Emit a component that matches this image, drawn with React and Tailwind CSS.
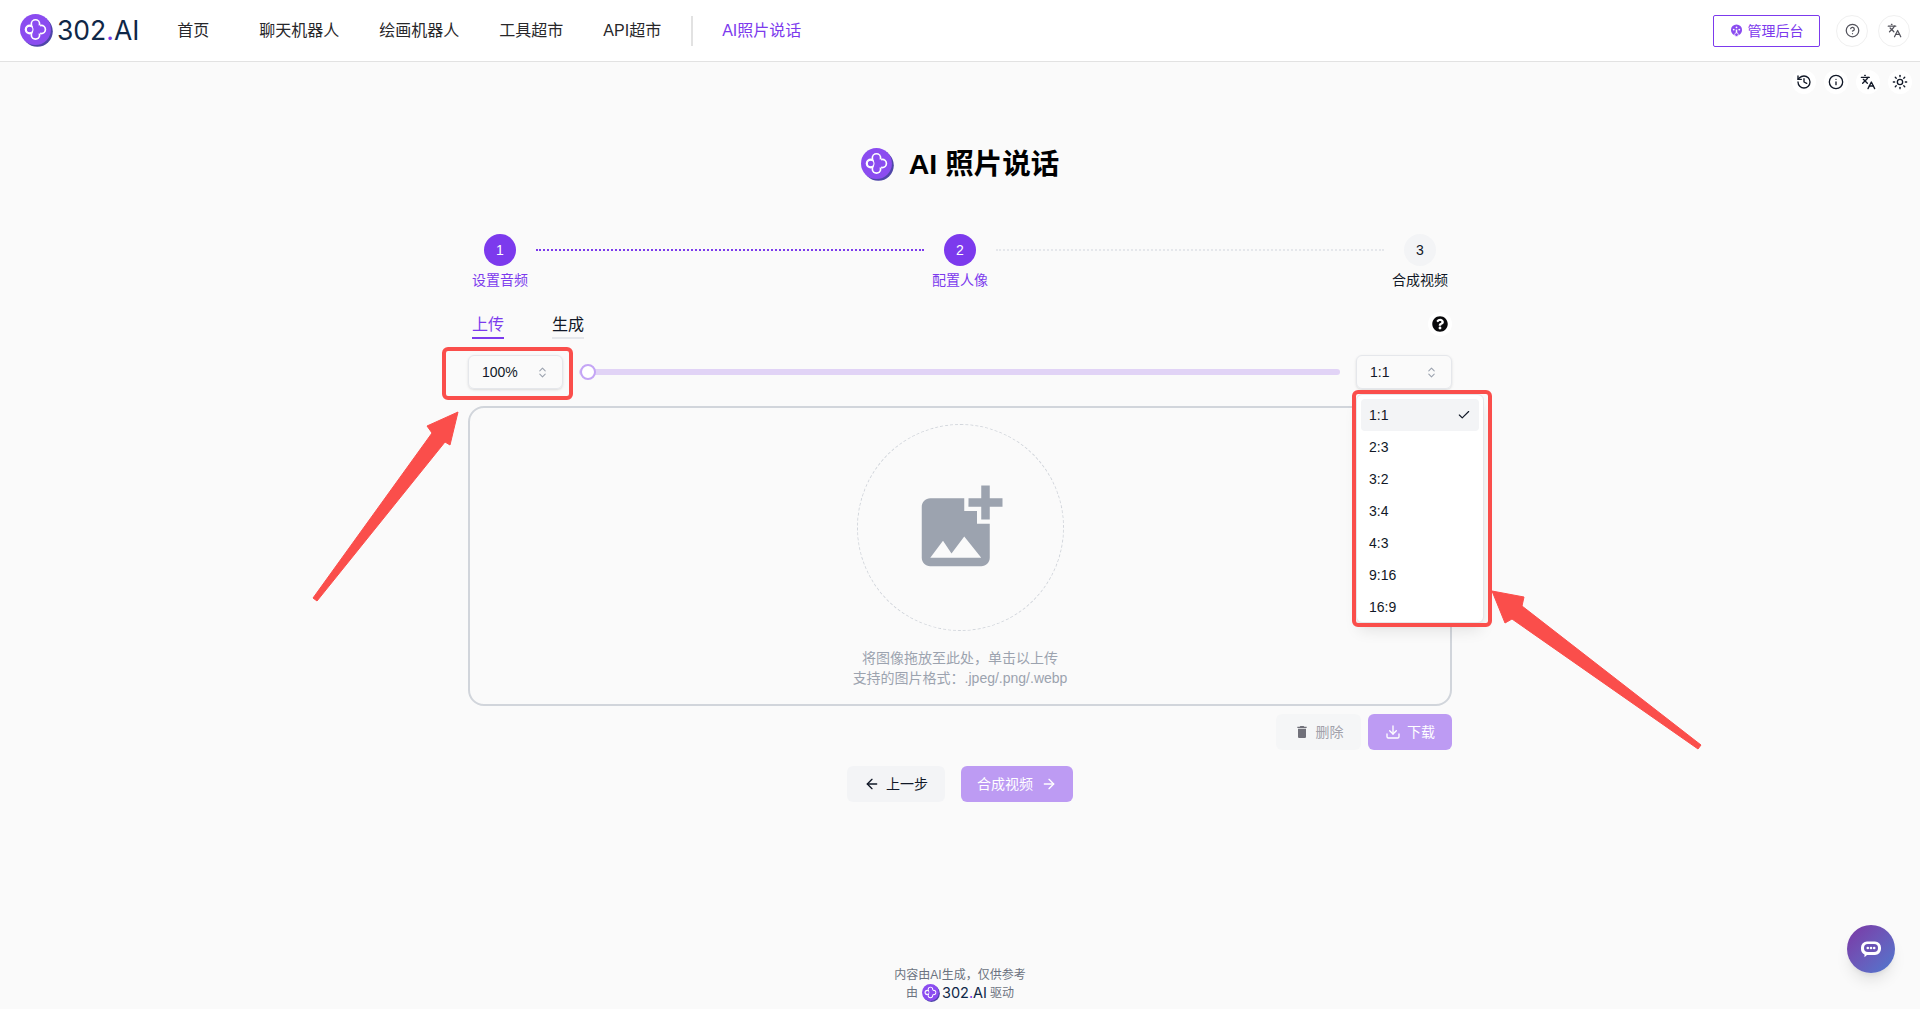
import React from "react";
import { ArrowLeft, ArrowRight, Check, ChevronsUpDown, CircleHelp, Download, History, Info, Languages, Sun } from "lucide-react";
import { FaQuestionCircle } from "react-icons/fa";

const Logo = ({ size = 32 }) => (
  <svg width={size} height={size} viewBox="0 0 32 32" className="shrink-0">
    <circle cx="16.8" cy="16.8" r="15" fill="#4f46a8" />
    <circle cx="15" cy="15" r="15" fill="#8b4cf0" />
    <g fill="#fff">
      <circle cx="15" cy="9.6" r="4.8" />
      <circle cx="9.4" cy="15" r="4.8" />
      <circle cx="20.6" cy="15" r="4.8" />
      <circle cx="15" cy="20.4" r="4.8" />
    </g>
    <g fill="#8b4cf0">
      <circle cx="15" cy="9.6" r="3.2" />
      <circle cx="20.6" cy="15" r="3.2" />
      <circle cx="15" cy="20.4" r="3.2" />
      <rect x="12.5" y="11" width="7" height="8" />
    </g>
    <circle cx="9.4" cy="15" r="3.2" fill="#8b4cf0" stroke="#fff" strokeWidth="1" />
  </svg>
);

const Brand = ({ className }) => (
  <span className={`text-[#0f2747] ${className}`} style={{ fontFamily: "Inter, sans-serif" }}>
    302<span className="text-[#7c3aed]">.</span>AI
  </span>
);

const ToolIcon = ({ children }) => (
  <div className="w-6 h-6 rounded-full bg-white flex items-center justify-center text-[#111827]">{children}</div>
);

const Step = ({ n, label, active }) => (
  <div className="w-16 flex flex-col items-center shrink-0">
    <div className={`w-8 h-8 rounded-full flex items-center justify-center text-sm ${active ? "bg-[#7c3aed] text-white" : "bg-[#f3f4f6] text-[#111827]"}`}>
      {n}
    </div>
    <div className={`mt-1 text-sm leading-5 whitespace-nowrap ${active ? "text-[#7c3aed]" : "text-[#111827]"}`}>{label}</div>
  </div>
);

const Select = ({ value, className }) => (
  <div className={`h-[34px] shrink-0 rounded-md border border-[#e5e7eb] shadow-sm flex items-center justify-between pl-[13px] pr-[13px] text-sm text-[#111827] ${className}`}>
    <span>{value}</span>
    <ChevronsUpDown size={13} className="text-[#9ca3af]" />
  </div>
);

const ratios = ["1:1", "2:3", "3:2", "3:4", "4:3", "9:16", "16:9"];

export default function App() {
  return (
    <div
      className="relative min-h-[1009px] flex flex-col bg-[#fafafa] overflow-hidden"
      style={{ fontFamily: '"Liberation Sans", "Noto Sans CJK SC", sans-serif' }}
    >
      {/* top nav */}
      <header className="h-[62px] shrink-0 bg-white border-b border-[#e2e2e2] flex items-center pl-5 pr-[10px]">
        <Logo size={33} />
        <Brand className="ml-[4px] text-[26.5px] leading-none" />
        <nav className="ml-[38px] flex items-center gap-10 text-base text-[#27272a]">
          <span className="mr-[10px]">首页</span>
          <span>聊天机器人</span>
          <span>绘画机器人</span>
          <span>工具超市</span>
          <span>API超市</span>
        </nav>
        <div className="ml-[30px] w-[2px] h-[30px] bg-[#e2e2e2]" />
        <span className="ml-[29px] text-base text-[#7c3aed]">AI照片说话</span>
        <div className="ml-auto flex items-center">
          <button className="w-[107px] h-8 rounded-[2px] border-[1.5px] border-[#7c3aed] flex items-center justify-center gap-[5px] text-sm text-[#7c3aed]">
            <svg width="13" height="13" viewBox="0 0 14 14">
              <circle cx="7" cy="6.5" r="6" fill="#8b4cf0" />
              <circle cx="4" cy="6" r="1" fill="#fff" />
              <circle cx="7" cy="3.6" r="1" fill="#fff" />
              <circle cx="10" cy="6" r="1" fill="#fff" />
              <rect x="6.2" y="6" width="1.6" height="6" fill="#fff" />
              <circle cx="7" cy="11.5" r="2" fill="#8b4cf0" stroke="#fff" strokeWidth="0.8" />
            </svg>
            管理后台
          </button>
          <div className="ml-4 w-8 h-8 rounded-full border border-[#f0f0f0] flex items-center justify-center text-[#52525b]">
            <CircleHelp size={15} />
          </div>
          <div className="ml-[10px] w-8 h-8 rounded-full border border-[#f0f0f0] flex items-center justify-center text-[#52525b]">
            <Languages size={15} />
          </div>
        </div>
      </header>

      {/* page tools */}
      <div className="mt-2 pr-2 flex justify-end gap-2">
        <ToolIcon><History size={16} /></ToolIcon>
        <ToolIcon><Info size={16} /></ToolIcon>
        <ToolIcon><Languages size={16} /></ToolIcon>
        <ToolIcon><Sun size={16} /></ToolIcon>
      </div>

      <h1 className="mt-[52px] flex items-center justify-center gap-[15px] text-[28.5px] leading-9 font-bold text-black">
        <Logo size={33} />
        AI 照片说话
      </h1>

      <main className="relative w-[984px] mx-auto mt-[52px]">
        {/* steps */}
        <div className="flex items-start">
          <Step n="1" label="设置音频" active />
          <div className="flex-1 mx-1 mt-[15px] border-t-2 border-dotted border-[#7c3aed]" />
          <Step n="2" label="配置人像" active />
          <div className="flex-1 mx-1 mt-[15px] border-t-2 border-dotted border-[#e5e7eb]" />
          <Step n="3" label="合成视频" />
        </div>

        {/* tabs */}
        <div className="mt-[23px] pl-1 flex items-start justify-between">
          <div className="flex gap-12 text-base">
            <div className="h-[26px] leading-6 border-b-2 border-[#7c3aed] text-[#7c3aed]">上传</div>
            <div className="h-[26px] leading-6 border-b-2 border-[#e5e7eb] text-[#111827]">生成</div>
          </div>
          <div className="-mt-[1px] w-6 h-6 rounded-full bg-white flex items-center justify-center text-[#09090b]">
            <FaQuestionCircle size={16} />
          </div>
        </div>

        {/* size row */}
        <div className="mt-4 flex items-center gap-4">
          <Select value="100%" className="w-[95px]" />
          <div className="relative flex-1 h-4 flex items-center">
            <div className="w-full h-[6px] rounded-full bg-[#e1d3f6]" />
            <div className="absolute left-px top-0 w-4 h-4 rounded-full bg-white border-2 border-[#c4a5f5]" />
          </div>
          <Select value="1:1" className="w-[96px]" />
        </div>

        {/* upload card */}
        <div className="mt-[17px] h-[300px] rounded-2xl border-2 border-[#d1d5db] flex flex-col items-center pt-4">
          <div className="w-[207px] h-[207px] shrink-0 rounded-full border border-dashed border-[#d1d5db] flex items-center justify-center">
            <svg width="102" height="102" viewBox="0 0 24 24" fill="#9ca3af">
              <path d="M19 7v2.99s-1.99.01-2 0V7h-3s.01-1.99 0-2h3V2h2v3h3v2h-3zm-3 4V8h-3V5H5c-1.1 0-2 .9-2 2v12c0 1.1.9 2 2 2h12c1.1 0 2-.9 2-2v-8h-3zM5 19l3-4 2 3 3-4 4 5H5z" />
            </svg>
          </div>
          <p className="mt-[17px] text-sm leading-5 text-center text-[#9ca3af]">
            将图像拖放至此处，单击以上传
            <br />
            支持的图片格式：.jpeg/.png/.webp
          </p>
        </div>

        <div className="mt-2 flex justify-end gap-[7px] text-sm">
          <button className="w-[85px] h-9 rounded-md bg-[#f5f6f7] flex items-center justify-center gap-[6px] text-[#a1a1aa]">
            <svg width="16" height="16" viewBox="0 0 24 24" fill="#71717a">
              <path d="M6 19c0 1.1.9 2 2 2h8c1.1 0 2-.9 2-2V7H6v12zM19 4h-3.5l-1-1h-5l-1 1H5v2h14V4z" />
            </svg>
            删除
          </button>
          <button className="w-[84px] h-9 rounded-md bg-[#bd9bf3] flex items-center justify-center gap-[6px] text-white">
            <Download size={16} />
            下载
          </button>
        </div>

        <div className="mt-4 flex justify-center gap-4 text-sm">
          <button className="w-[98px] h-9 rounded-md bg-[#f3f4f6] flex items-center justify-center gap-[6px] text-[#111827]">
            <ArrowLeft size={16} />
            上一步
          </button>
          <button className="w-[112px] h-9 rounded-md bg-[#bd9bf3] flex items-center justify-center gap-[8px] text-white">
            合成视频
            <ArrowRight size={16} />
          </button>
        </div>

        {/* open ratio menu */}
        <div className="absolute left-[888px] top-[160px] w-[128px] h-[229px] bg-white rounded-md border border-[#e5e7eb] shadow-lg p-1 text-sm text-[#111827]">
          {ratios.map((r, i) => (
            <div key={r} className={`h-8 pl-2 pr-2 rounded flex items-center justify-between ${i === 0 ? "bg-[#f3f4f6]" : ""}`}>
              {r}
              {i === 0 && <Check size={14} />}
            </div>
          ))}
        </div>

        {/* red annotation boxes */}
        <div className="absolute left-[-26px] top-[113px] w-[131px] h-[53px] rounded-md border-4 border-[#fa4e4b]" />
        <div className="absolute left-[884px] top-[156px] w-[140px] h-[237px] rounded-md border-4 border-[#fa4e4b]" />
      </main>

      <footer className="mt-auto pb-2 text-center text-xs leading-[18px] text-[#6b7280]">
        <div>内容由AI生成，仅供参考</div>
        <div className="h-[17px] flex items-center justify-center">
          <span className="mr-1">由</span>
          <Logo size={18} />
          <Brand className="ml-[2px] mr-[3px] text-[14.5px] leading-[18px]" />
          驱动
        </div>
      </footer>

      {/* chat bubble */}
      <div className="absolute left-[1847px] top-[925px] w-12 h-12 rounded-full bg-gradient-to-br from-[#7a35a5] to-[#4a78cf] shadow-lg flex items-center justify-center">
        <svg width="24" height="24" viewBox="0 0 24 24">
          <path d="M8 4.5h8a6 6 0 0 1 6 6v1.5a6 6 0 0 1-6 6H8l-2.5 2.2V17.4A6 6 0 0 1 2 12v-1.5a6 6 0 0 1 6-6z" fill="#fff" />
          <rect x="5" y="7" width="14" height="8" rx="4" fill="#6a52b5" />
          <circle cx="8.8" cy="11" r="1.3" fill="#fff" />
          <circle cx="12" cy="11" r="1.3" fill="#fff" />
          <circle cx="15.2" cy="11" r="1.3" fill="#fff" />
        </svg>
      </div>

      {/* red annotation arrows */}
      <svg className="absolute left-0 top-0 pointer-events-none" width="1920" height="1009">
        <polygon
          points="458,412 450,445 445,442 317,601 313,598 432,433 427,426"
          fill="#fa4e4b"
          stroke="#fa4e4b"
          strokeLinejoin="round"
        />
        <polygon
          points="1492,591 1524,597 1522,606 1701,745 1698,749 1512,619 1505,623"
          fill="#fa4e4b"
          stroke="#fa4e4b"
          strokeLinejoin="round"
        />
      </svg>
    </div>
  );
}
